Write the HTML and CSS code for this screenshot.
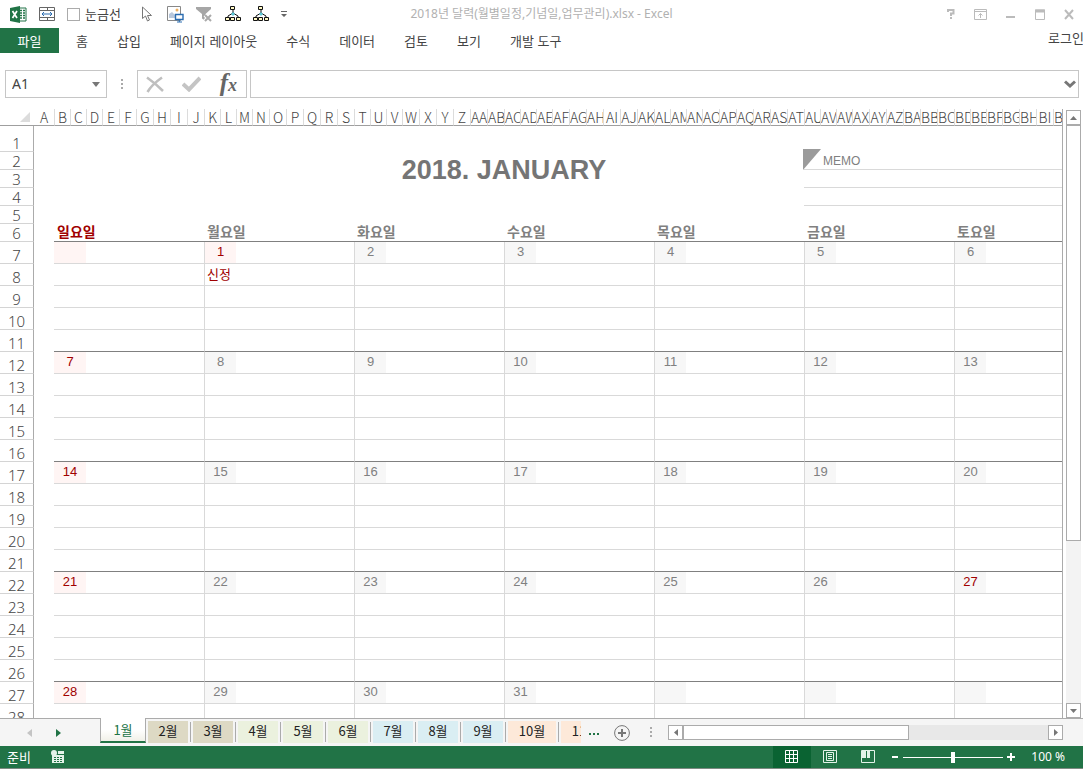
FILE: index.html
```html
<!DOCTYPE html>
<html lang="ko">
<head>
  <meta charset="UTF-8" />
  <title>2018년 달력(월별일정,기념일,업무관리).xlsx - Excel</title>
  <meta name="viewport" content="width=device-width, initial-scale=1.0" />
  <link rel="stylesheet" href="styles.css">
</head>
<body>
  <header class="titlebar">
    <div class="quick">
      <svg class="logo" width="17" height="17" viewBox="0 0 17 17">
        <path d="M9 2h7v13H9z" fill="#fff" stroke="#217346"/>
        <path d="M10 4.500h2M13 4.500h2M10 7h2M13 7h2M10 9.500h2M13 9.500h2M10 12h2M13 12h2" stroke="#217346" stroke-width="1.500"/>
        <path d="M0 2l10-2v17L0 15z" fill="#217346"/>
        <path d="M2.500 5l4.500 7M7 5l-4.500 7" stroke="#fff" stroke-width="1.700"/>
      </svg>
      <button type="button" aria-label="병합">
        <svg width="16" height="16" viewBox="0 0 16 16" fill="none" stroke="#666">
          <path d="M.5 1.500h15v13H.5zM.5 4.500h15M.5 11.500h15M8.500 1v3M8.500 12v3"/>
          <path d="M3 8h10M5 6L3 8l2 2M11 6l2 2-2 2" stroke="#2b6cb0"/>
        </svg>
      </button>
      <label class="gridlines"><input type="checkbox" />눈금선</label>
      <button type="button" class="select" aria-label="개체 선택">
        <svg width="12" height="16" viewBox="0 0 12 16" fill="#fff" stroke="#777">
          <path d="M1.500 1v11.500L4.500 10l2 5 2-1-2-4.500h4z"/>
        </svg>
      </button>
      <button type="button" aria-label="그림">
        <svg width="17" height="17" viewBox="0 0 17 17" fill="none">
          <path d="M.5 .5h13v14H.5z" fill="#fff" stroke="#888"/>
          <path d="M2 12V8l3-2 3 3v3z" fill="#b9c8dc"/>
          <circle cx="10" cy="4" r="1.500" fill="#f0b060"/>
          <path d="M8.500 8.500h7.500v5H8.500z" fill="#fff" stroke="#2b6cb0" stroke-width="1.400"/>
          <path d="M12.300 13v3M10 16h5" stroke="#2b6cb0"/>
        </svg>
      </button>
      <button type="button" aria-label="필터 지우기">
        <svg width="17" height="17" viewBox="0 0 17 17">
          <path d="M0 1h15v2L9.500 8v7L6 12.500V8L0 3z" fill="#a6a6a6"/>
          <path d="M9 9l6 6M15 9l-6 6" stroke="#fff" stroke-width="4"/>
          <path d="M9 9l6 6M15 9l-6 6" stroke="#aaa" stroke-width="2"/>
        </svg>
      </button>
      <button type="button" aria-label="조직도">
        <svg width="16" height="16" viewBox="0 0 16 16" fill="#fff9c4" stroke="#111">
          <path d="M8 4v3M3 10l5-3 5 3M3 10v1M13 10v1" fill="none"/>
          <path d="M8 6l2 2-2 2-2-2z" fill="#5bc8d8" stroke="none"/>
          <path d="M5.500 .5h4v3h-4zM.5 11.500h4v3h-4zM5.500 11.500h4v3h-4zM11.500 11.500h4v3h-4z"/>
        </svg>
      </button>
      <button type="button" aria-label="조직도 2">
        <svg width="16" height="16" viewBox="0 0 16 16" fill="#fff9c4" stroke="#111">
          <path d="M8 4v3M3 10l5-3 5 3M3 10v1M13 10v1" fill="none"/>
          <path d="M8 6l2 2-2 2-2-2z" fill="#5bc8d8" stroke="none"/>
          <path d="M5.500 .5h4v3h-4zM.5 11.500h4v3h-4zM5.500 11.500h4v3h-4zM11.500 11.500h4v3h-4z"/>
        </svg>
      </button>
      <button type="button" aria-label="빠른 실행 도구 모음 사용자 지정">
        <svg width="7" height="7" viewBox="0 0 7 7"><path d="M0 0h6v1H0zM0 3h6L3 6z" fill="#666"/></svg>
      </button>
    </div>
    <h1>2018년 달력(월별일정,기념일,업무관리).xlsx - Excel</h1>
    <div class="window">
      <button type="button" aria-label="도움말">
        <svg width="8" height="12" viewBox="0 0 8 12" fill="none" stroke="#bbb" stroke-width="2"><path d="M1 4V2h5.500v3.500H4V8M4 9v2"/></svg>
      </button>
      <button type="button" aria-label="리본 메뉴 표시 옵션">
        <svg width="13" height="11" viewBox="0 0 13 11" fill="none" stroke="#bbb"><path d="M.5 .5h12v10H.5zM.5 2.500h12M6.500 9V4.500M4.500 6.500l2-2 2 2"/></svg>
      </button>
      <button type="button" aria-label="최소화">
        <svg width="10" height="11" viewBox="0 0 10 11"><path d="M0 7h9v2H0z" fill="#bbb"/></svg>
      </button>
      <button type="button" aria-label="최대화">
        <svg width="10" height="11" viewBox="0 0 10 11" fill="none" stroke="#bbb"><path d="M.5 1h9v9.500h-9z"/><path d="M0 2h10" stroke-width="3"/></svg>
      </button>
      <button type="button" aria-label="닫기">
        <svg width="10" height="11" viewBox="0 0 10 11" stroke="#bbb" stroke-width="2"><path d="M1 1l8 9M9 1L1 10"/></svg>
      </button>
    </div>
  </header>

  <nav class="ribbon">
    <button type="button" class="file">파일</button>
    <a href="#">홈</a>
    <a href="#">삽입</a>
    <a href="#">페이지 레이아웃</a>
    <a href="#">수식</a>
    <a href="#">데이터</a>
    <a href="#">검토</a>
    <a href="#">보기</a>
    <a href="#">개발 도구</a>
    <a href="#" class="login">로그인</a>
  </nav>

  <div class="formula-row">
    <div class="namebox">
      <input type="text" value="A1" aria-label="이름 상자" />
      <button type="button" aria-label="이름 목록">
        <svg width="8" height="5" viewBox="0 0 8 5"><path d="M0 0h8L4 5z" fill="#777"/></svg>
      </button>
    </div>
    <svg class="grip" width="3" height="11" viewBox="0 0 3 11" fill="#aaa"><path d="M0 0h2v2H0zM0 4h2v2H0zM0 8h2v2H0z"/></svg>
    <div class="fxbox">
      <button type="button" aria-label="취소">
        <svg width="18" height="17" viewBox="0 0 18 17" fill="none" stroke="#bfbfbf"><path d="M1 1.500C6 5 12 10 17 15" stroke-width="2.500"/><path d="M16 1.500C11 5 5 10 1.500 16" stroke-width="2.500"/></svg>
      </button>
      <button type="button" aria-label="입력">
        <svg width="19" height="16" viewBox="0 0 19 16" fill="none" stroke="#c4c4c4" stroke-width="4"><path d="M1 8l6 5.500L18 2"/></svg>
      </button>
      <button type="button" class="fx" aria-label="함수 삽입"><i>f</i><i class="x">x</i></button>
    </div>
    <div class="formula">
      <input type="text" aria-label="수식 입력줄" />
      <button type="button" aria-label="수식 입력줄 확장">
        <svg width="12" height="9" viewBox="0 0 12 9" fill="none" stroke="#777" stroke-width="3"><path d="M1 1.500l5 4.500 5-4.500"/></svg>
      </button>
    </div>
  </div>

  <main class="workspace">
    <div class="sheet">
      <table>
        <colgroup>
          <col class="rowhead"><col class="first">
          <col span="3" class="narrow"><col span="6" class="wide">
          <col span="3" class="narrow"><col span="6" class="wide">
          <col span="3" class="narrow"><col span="6" class="wide">
          <col span="3" class="narrow"><col span="6" class="wide">
          <col span="3" class="narrow"><col span="6" class="wide">
          <col span="3" class="narrow"><col span="6" class="wide">
          <col span="3" class="narrow"><col span="6" class="wide">
        </colgroup>
        <thead>
          <tr>
            <td class="corner"><svg width="10" height="10" viewBox="0 0 10 10"><path d="M10 0v10H0z" fill="#dcdcdc"/></svg></td>
            <th>A</th>
            <th>B</th><th>C</th><th>D</th><th>E</th><th>F</th><th>G</th><th>H</th><th>I</th><th>J</th>
            <th>K</th><th>L</th><th>M</th><th>N</th><th>O</th><th>P</th><th>Q</th><th>R</th><th>S</th>
            <th>T</th><th>U</th><th>V</th><th>W</th><th>X</th><th>Y</th><th>Z</th><th>AA</th><th>AB</th>
            <th>AC</th><th>AD</th><th>AE</th><th>AF</th><th>AG</th><th>AH</th><th>AI</th><th>AJ</th><th>AK</th>
            <th>AL</th><th>AM</th><th>AN</th><th>AO</th><th>AP</th><th>AQ</th><th>AR</th><th>AS</th><th>AT</th>
            <th>AU</th><th>AV</th><th>AW</th><th>AX</th><th>AY</th><th>AZ</th><th>BA</th><th>BB</th><th>BC</th>
            <th>BD</th><th>BE</th><th>BF</th><th>BG</th><th>BH</th><th>BI</th><th>BJ</th><th>BK</th><th>BL</th>
          </tr>
        </thead>
        <tbody class="top">
          <tr class="tall"><th>1</th><td></td><td colspan="63"></td></tr>
          <tr>
            <th>2</th><td></td><td colspan="9"></td>
            <td colspan="36" rowspan="2" class="month">2018. JANUARY</td>
            <td colspan="18" class="memo">
              <svg class="flag" width="18" height="21" viewBox="0 0 18 21"><path d="M0 0h18L0 21z" fill="#9b9b9b"/></svg>MEMO
            </td>
          </tr>
          <tr><th>3</th><td></td><td colspan="9"></td><td colspan="18" class="memo"></td></tr>
          <tr><th>4</th><td></td><td colspan="45"></td><td colspan="18" class="memo"></td></tr>
          <tr><th>5</th><td></td><td colspan="63"></td></tr>
          <tr class="weekdays">
            <th>6</th><td></td>
            <td colspan="9" class="red">일요일</td><td colspan="9">월요일</td><td colspan="9">화요일</td><td colspan="9">수요일</td><td colspan="9">목요일</td><td colspan="9">금요일</td><td colspan="9">토요일</td>
          </tr>
        </tbody>
        <tbody class="week">
          <tr class="dates">
            <th>7</th><td></td>
            <td colspan="2" class="date off"></td><td colspan="7"></td>
            <td colspan="2" class="date off">1</td><td colspan="7"></td>
            <td colspan="2" class="date">2</td><td colspan="7"></td>
            <td colspan="2" class="date">3</td><td colspan="7"></td>
            <td colspan="2" class="date">4</td><td colspan="7"></td>
            <td colspan="2" class="date">5</td><td colspan="7"></td>
            <td colspan="2" class="date">6</td><td colspan="7"></td>
          </tr>
          <tr><th>8</th><td></td><td colspan="9"></td><td colspan="9" class="holiday">신정</td><td colspan="9"></td><td colspan="9"></td><td colspan="9"></td><td colspan="9"></td><td colspan="9"></td></tr>
          <tr><th>9</th><td></td><td colspan="9"></td><td colspan="9"></td><td colspan="9"></td><td colspan="9"></td><td colspan="9"></td><td colspan="9"></td><td colspan="9"></td></tr>
          <tr><th>10</th><td></td><td colspan="9"></td><td colspan="9"></td><td colspan="9"></td><td colspan="9"></td><td colspan="9"></td><td colspan="9"></td><td colspan="9"></td></tr>
          <tr><th>11</th><td></td><td colspan="9"></td><td colspan="9"></td><td colspan="9"></td><td colspan="9"></td><td colspan="9"></td><td colspan="9"></td><td colspan="9"></td></tr>
        </tbody>
        <tbody class="week">
          <tr class="dates">
            <th>12</th><td></td>
            <td colspan="2" class="date off">7</td><td colspan="7"></td>
            <td colspan="2" class="date">8</td><td colspan="7"></td>
            <td colspan="2" class="date">9</td><td colspan="7"></td>
            <td colspan="2" class="date">10</td><td colspan="7"></td>
            <td colspan="2" class="date">11</td><td colspan="7"></td>
            <td colspan="2" class="date">12</td><td colspan="7"></td>
            <td colspan="2" class="date">13</td><td colspan="7"></td>
          </tr>
          <tr><th>13</th><td></td><td colspan="9"></td><td colspan="9"></td><td colspan="9"></td><td colspan="9"></td><td colspan="9"></td><td colspan="9"></td><td colspan="9"></td></tr>
          <tr><th>14</th><td></td><td colspan="9"></td><td colspan="9"></td><td colspan="9"></td><td colspan="9"></td><td colspan="9"></td><td colspan="9"></td><td colspan="9"></td></tr>
          <tr><th>15</th><td></td><td colspan="9"></td><td colspan="9"></td><td colspan="9"></td><td colspan="9"></td><td colspan="9"></td><td colspan="9"></td><td colspan="9"></td></tr>
          <tr><th>16</th><td></td><td colspan="9"></td><td colspan="9"></td><td colspan="9"></td><td colspan="9"></td><td colspan="9"></td><td colspan="9"></td><td colspan="9"></td></tr>
        </tbody>
        <tbody class="week">
          <tr class="dates">
            <th>17</th><td></td>
            <td colspan="2" class="date off">14</td><td colspan="7"></td>
            <td colspan="2" class="date">15</td><td colspan="7"></td>
            <td colspan="2" class="date">16</td><td colspan="7"></td>
            <td colspan="2" class="date">17</td><td colspan="7"></td>
            <td colspan="2" class="date">18</td><td colspan="7"></td>
            <td colspan="2" class="date">19</td><td colspan="7"></td>
            <td colspan="2" class="date">20</td><td colspan="7"></td>
          </tr>
          <tr><th>18</th><td></td><td colspan="9"></td><td colspan="9"></td><td colspan="9"></td><td colspan="9"></td><td colspan="9"></td><td colspan="9"></td><td colspan="9"></td></tr>
          <tr><th>19</th><td></td><td colspan="9"></td><td colspan="9"></td><td colspan="9"></td><td colspan="9"></td><td colspan="9"></td><td colspan="9"></td><td colspan="9"></td></tr>
          <tr><th>20</th><td></td><td colspan="9"></td><td colspan="9"></td><td colspan="9"></td><td colspan="9"></td><td colspan="9"></td><td colspan="9"></td><td colspan="9"></td></tr>
          <tr><th>21</th><td></td><td colspan="9"></td><td colspan="9"></td><td colspan="9"></td><td colspan="9"></td><td colspan="9"></td><td colspan="9"></td><td colspan="9"></td></tr>
        </tbody>
        <tbody class="week">
          <tr class="dates">
            <th>22</th><td></td>
            <td colspan="2" class="date off">21</td><td colspan="7"></td>
            <td colspan="2" class="date">22</td><td colspan="7"></td>
            <td colspan="2" class="date">23</td><td colspan="7"></td>
            <td colspan="2" class="date">24</td><td colspan="7"></td>
            <td colspan="2" class="date">25</td><td colspan="7"></td>
            <td colspan="2" class="date">26</td><td colspan="7"></td>
            <td colspan="2" class="date red">27</td><td colspan="7"></td>
          </tr>
          <tr><th>23</th><td></td><td colspan="9"></td><td colspan="9"></td><td colspan="9"></td><td colspan="9"></td><td colspan="9"></td><td colspan="9"></td><td colspan="9"></td></tr>
          <tr><th>24</th><td></td><td colspan="9"></td><td colspan="9"></td><td colspan="9"></td><td colspan="9"></td><td colspan="9"></td><td colspan="9"></td><td colspan="9"></td></tr>
          <tr><th>25</th><td></td><td colspan="9"></td><td colspan="9"></td><td colspan="9"></td><td colspan="9"></td><td colspan="9"></td><td colspan="9"></td><td colspan="9"></td></tr>
          <tr><th>26</th><td></td><td colspan="9"></td><td colspan="9"></td><td colspan="9"></td><td colspan="9"></td><td colspan="9"></td><td colspan="9"></td><td colspan="9"></td></tr>
        </tbody>
        <tbody class="week">
          <tr class="dates">
            <th>27</th><td></td>
            <td colspan="2" class="date off">28</td><td colspan="7"></td>
            <td colspan="2" class="date">29</td><td colspan="7"></td>
            <td colspan="2" class="date">30</td><td colspan="7"></td>
            <td colspan="2" class="date">31</td><td colspan="7"></td>
            <td colspan="2" class="date"></td><td colspan="7"></td>
            <td colspan="2" class="date"></td><td colspan="7"></td>
            <td colspan="2" class="date"></td><td colspan="7"></td>
          </tr>
          <tr><th>28</th><td></td><td colspan="9"></td><td colspan="9"></td><td colspan="9"></td><td colspan="9"></td><td colspan="9"></td><td colspan="9"></td><td colspan="9"></td></tr>
        </tbody>
      </table>
    </div>
    <div class="vscroll">
      <button type="button" aria-label="위로"><svg width="7" height="4" viewBox="0 0 7 4"><path d="M0 4h7L3.500 0z" fill="#777"/></svg></button>
      <div class="track"><div class="thumb"></div></div>
      <button type="button" aria-label="아래로"><svg width="7" height="4" viewBox="0 0 7 4"><path d="M0 0h7L3.500 4z" fill="#777"/></svg></button>
    </div>
  </main>

  <div class="tabbar">
    <div class="tabnav">
      <button type="button" aria-label="이전 시트"><svg width="5" height="8" viewBox="0 0 5 8"><path d="M5 0v8L0 4z" fill="#c4c4c4"/></svg></button>
      <button type="button" aria-label="다음 시트"><svg width="5" height="8" viewBox="0 0 5 8"><path d="M0 0v8l5-4z" fill="#217346"/></svg></button>
    </div>
    <div class="tabs">
      <button type="button" class="active">1월</button>
      <button type="button" class="tan">2월</button>
      <button type="button" class="tan">3월</button>
      <button type="button" class="olive">4월</button>
      <button type="button" class="olive">5월</button>
      <button type="button" class="olive">6월</button>
      <button type="button" class="blue">7월</button>
      <button type="button" class="blue">8월</button>
      <button type="button" class="blue">9월</button>
      <button type="button" class="peach">10월</button>
      <button type="button" class="peach">11월</button>
    </div>
    <button type="button" class="more" aria-label="시트 더 보기"><svg width="12" height="3" viewBox="0 0 12 3"><path d="M0 0h2v2H0zM4 0h2v2H4zM8 0h2v2H8z" fill="#217346"/></svg></button>
    <button type="button" class="add" aria-label="새 시트">
      <svg width="16" height="16" viewBox="0 0 16 16" fill="none" stroke="#777"><circle cx="8" cy="8" r="7.400"/><path d="M8 4v8M4 8h8" stroke-width="2"/></svg>
    </button>
    <svg class="grip" width="3" height="11" viewBox="0 0 3 11" fill="#aaa"><path d="M0 0h2v2H0zM0 4h2v2H0zM0 8h2v2H0z"/></svg>
    <div class="hscroll">
      <button type="button" aria-label="왼쪽으로"><svg width="4" height="7" viewBox="0 0 4 7"><path d="M4 0v7L0 3.500z" fill="#777"/></svg></button>
      <div class="track"><div class="thumb"></div></div>
      <button type="button" aria-label="오른쪽으로"><svg width="4" height="7" viewBox="0 0 4 7"><path d="M0 0v7l4-3.500z" fill="#777"/></svg></button>
    </div>
  </div>

  <footer class="status">
    <span>준비</span>
    <button type="button" class="macro" aria-label="매크로 기록">
      <svg width="14" height="14" viewBox="0 0 14 14" fill="#e4f3e9"><path d="M7 1h6v3H7zM1 5h12v8H1z"/><path d="M3 7h2v1H3zM6 7h2v1H6zM9 7h2v1H9zM3 9h2v1H3zM6 9h2v1H6zM9 9h2v1H9zM3 11h2v1H3zM6 11h2v1H6zM9 11h2v1H9z" fill="#217346"/><circle cx="3" cy="3" r="3"/></svg>
    </button>
    <div class="views">
      <button type="button" class="on" aria-label="기본">
        <svg width="14" height="14" viewBox="0 0 14 14" fill="none" stroke="#fff"><path d="M.5 .5h12v12H.5zM4.500 0v13M8.500 0v13M0 4.500h13M0 8.500h13"/></svg>
      </button>
      <button type="button" aria-label="페이지 레이아웃 보기">
        <svg width="14" height="14" viewBox="0 0 14 14" fill="none" stroke="#e4f3e9"><path d="M.5 .5h13v12H.5zM3.500 2.500h7v8h-7zM5 4.500h4M5 6.500h4M5 8.500h4"/></svg>
      </button>
      <button type="button" aria-label="페이지 나누기 미리 보기">
        <svg width="14" height="14" viewBox="0 0 14 14" fill="none" stroke="#e4f3e9"><path d="M.5 .5h13v12H.5z"/><path d="M1 1h4v7H1zM6 1h3v7H6z" fill="#e4f3e9" stroke="none"/></svg>
      </button>
    </div>
    <button type="button" class="zoom" aria-label="축소"><svg width="8" height="8" viewBox="0 0 8 8"><path d="M1 3h6v2H1z" fill="#fff"/></svg></button>
    <input type="range" min="10" max="190" value="100" aria-label="확대/축소" />
    <button type="button" class="zoom" aria-label="확대"><svg width="8" height="8" viewBox="0 0 8 8"><path d="M0 3h8v2H0zM3 0h2v8H3z" fill="#fff"/></svg></button>
    <span class="percent">100 %</span>
  </footer>
</body>
</html>
```
FILE: styles.css
```css
* {
  box-sizing: border-box;
}
body {
  margin: 0;
  height: 100vh;
  display: flex;
  flex-direction: column;
  overflow: hidden;
  background: #fff;
  color: #444;
  font-family: "Noto Sans CJK KR", sans-serif;
  font-size: 13px;
  line-height: 18px;
}
button, input {
  margin: 0;
  padding: 0;
  border: 0;
  background: none;
  color: inherit;
  font: inherit;
}
button {
  display: flex;
  align-items: center;
  justify-content: center;
}
a {
  color: inherit;
  text-decoration: none;
}
svg {
  display: block;
  flex: none;
}

/* title bar */
.titlebar {
  display: grid;
  grid-template-columns: 1fr auto 1fr;
  align-items: center;
  height: 28px;
}
.quick {
  display: flex;
  align-items: center;
  gap: 12px;
  padding-left: 10px;
}
.gridlines {
  display: flex;
  align-items: center;
  gap: 5px;
}
.gridlines input {
  appearance: none;
  width: 13px;
  height: 13px;
  border: 1px solid #ababab;
}
.select {
  margin: 0 2px 0 8px;
}
.titlebar h1 {
  margin: 0;
  color: #b1b1b1;
  font-family: "Noto Sans", "Noto Sans CJK KR", sans-serif;
  font-size: 12px;
  font-weight: 400;
}
.window {
  display: flex;
  align-items: center;
  justify-content: flex-end;
  gap: 19px;
  padding-right: 9px;
}

/* ribbon tabs */
.ribbon {
  display: flex;
  align-items: center;
  gap: 29px;
  height: 25px;
  white-space: nowrap;
}
.file {
  width: 59px;
  height: 25px;
  margin-right: -12px;
  background: #217346;
  color: #fff;
}
.login {
  margin: 0 -1px 6px auto;
}

/* formula bar */
.formula-row {
  display: flex;
  align-items: center;
  height: 28px;
  margin: 17px 4px 11px 5px;
}
.namebox, .fxbox, .formula {
  display: flex;
  align-items: center;
  height: 28px;
  border: 1px solid #c6c6c6;
}
.namebox {
  width: 102px;
  padding: 0 6px;
}
.namebox input {
  flex: 1;
  width: 0;
  font-family: "Noto Sans", sans-serif;
  font-size: 14px;
}
.grip {
  margin: 0 13px 0 14px;
}
.fxbox {
  width: 110px;
  padding: 0 9px 0 8px;
  justify-content: space-between;
}
.fx {
  align-items: baseline;
  color: #666;
  font-family: "Liberation Serif", serif;
  font-size: 25px;
  font-weight: 700;
  line-height: 24px;
}
.fx .x {
  font-size: 18px;
}
.formula {
  flex: 1;
  margin-left: 3px;
  padding-right: 2px;
}
.formula input {
  flex: 1;
}

/* sheet */
.workspace {
  flex: 1;
  display: flex;
  min-height: 0;
}
.sheet {
  flex: 1;
  min-width: 0;
  overflow: hidden;
  border-right: 1px solid #ababab;
}
table {
  width: 1104px;
  table-layout: fixed;
  border-collapse: separate;
  border-spacing: 0;
}
.rowhead {
  width: 34px;
}
.first {
  width: 20px;
}
.narrow {
  width: 16px;
}
.wide {
  width: 17px;
}
th, td {
  height: 18px;
  padding: 0;
  overflow: hidden;
  line-height: 16px;
  white-space: nowrap;
}
th {
  font-family: "Noto Sans", sans-serif;
  font-size: 15px;
  font-weight: 300;
}
thead th, .corner {
  height: 17px;
  border-bottom: 1px solid #9f9f9f;
}
thead th {
  border-left: 1px solid #dcdcdc;
  font-family: "Noto Sans CJK KR", sans-serif;
  font-size: 14px;
}
thead th:nth-child(2) {
  border-left: 0;
}
.corner svg {
  margin-left: 20px;
}
tbody th {
  vertical-align: bottom;
  border-right: 1px solid #ababab;
  border-bottom: 1px solid #d4d4d4;
}
.tall th {
  height: 26px;
}
.month {
  color: #757575;
  font-family: "Liberation Sans", sans-serif;
  font-size: 27px;
  font-weight: 700;
  line-height: 34px;
  text-align: center;
}
.memo {
  position: relative;
  overflow: visible;
  padding-left: 19px;
  border-bottom: 1px solid #d9d9d9;
  color: #808080;
  font-family: "Liberation Sans", sans-serif;
  font-size: 12px;
}
.flag {
  position: absolute;
  left: -1px;
  bottom: -1px;
}
.weekdays td {
  padding-left: 3px;
  border-bottom: 1px solid #808080;
  color: #808080;
  font-size: 14px;
  font-weight: 700;
  line-height: 14px;
  vertical-align: top;
}
.weekdays td:nth-child(2) {
  border: 0;
}
.week th, .week td {
  height: 22px;
}
.week td {
  border-left: 1px solid #d9d9d9;
  border-bottom: 1px solid #d9d9d9;
}
.week tr:last-child td {
  border-bottom-color: #808080;
}
.week td:nth-child(2) {
  border: 0;
}
.week td:nth-child(3) {
  border-left: 0;
}
.week .date {
  padding-bottom: 2px;
  background: #f7f7f7;
  color: #808080;
  font-family: "Liberation Sans", sans-serif;
  font-size: 13px;
  text-align: center;
}
.week .date + td {
  border-left: 0;
}
.week .off {
  background: #fff5f4;
  color: #a00000;
}
.week .red, .weekdays .red {
  color: #a00000;
}
.week .holiday {
  padding: 0 0 2px 2px;
  color: #a00000;
}

/* scroll bars */
.vscroll {
  display: flex;
  flex-direction: column;
  width: 15px;
  margin: 1px 2px 0 3px;
}
.vscroll button, .hscroll button {
  width: 15px;
  height: 15px;
  border: 1px solid #ababab;
  background: #fff;
}
.track {
  flex: 1;
  background: #e8e8e8;
}
.vscroll .track {
  background: #f3f3f3;
}
.thumb {
  border: 1px solid #ababab;
  background: #fff;
}
.vscroll .thumb {
  height: 72%;
}
.hscroll .thumb {
  width: 62%;
  height: 15px;
}

/* sheet tabs */
.tabbar {
  display: flex;
  align-items: center;
  height: 28px;
  border-top: 1px solid #ababab;
  background: #f5f5f5;
}
.tabnav {
  display: flex;
  gap: 24px;
  width: 100px;
  padding-left: 27px;
}
.tabs {
  display: flex;
  align-items: center;
  width: 481px;
  height: 28px;
  margin-top: -1px;
  overflow: hidden;
}
.tabs button {
  flex: none;
  width: 40px;
  height: 22px;
  margin-right: 5px;
  padding-bottom: 3px;
  color: #222;
  font-size: 13px;
  position: relative;
}
.tabs button::after {
  content: "";
  position: absolute;
  top: 1px;
  right: -3px;
  height: 20px;
  border-right: 1px solid #ababab;
}
.tabs .active {
  align-self: flex-start;
  width: 46px;
  height: 25px;
  margin-right: 2px;
  padding: 0;
  border: 1px solid #ababab;
  border-top: 0;
  border-bottom: 2px solid #217346;
  background: linear-gradient(#fff 50%, #f1f0e8);
  color: #217346;
}
.tabs .active::after {
  display: none;
}
.tabs .tan {
  background: #ddd9c4;
}
.tabs .olive {
  background: #ebf1de;
}
.tabs .blue {
  background: #daeef3;
}
.tabs .peach {
  width: 48px;
  background: #fde9d9;
}
.more {
  margin: 4px 0 0 8px;
}
.add {
  margin-left: 13px;
}
.tabbar .grip {
  margin: 0 15px 0 20px;
}
.hscroll {
  flex: 1;
  display: flex;
  margin-right: 20px;
}

/* status bar */
.status {
  display: flex;
  align-items: center;
  height: 23px;
  padding: 0 18px 0 7px;
  border-bottom: 1px solid #7d8a82;
  background: #217346;
  color: #fff;
}
.macro {
  margin-left: 20px;
}
.views {
  display: flex;
  margin: 0 4px 0 auto;
}
.views button {
  width: 38px;
  height: 22px;
}
.views .on {
  background: #0a6332;
}
.status input {
  appearance: none;
  width: 100px;
  height: 12px;
  margin: 0 4px;
  background: linear-gradient(#fff, #fff) center / 100% 1px no-repeat;
}
.status input::-webkit-slider-thumb {
  appearance: none;
  width: 4px;
  height: 11px;
  background: #fff;
}
.percent {
  margin-left: 16px;
  font-family: "Noto Sans", sans-serif;
  font-size: 12px;
}
```
